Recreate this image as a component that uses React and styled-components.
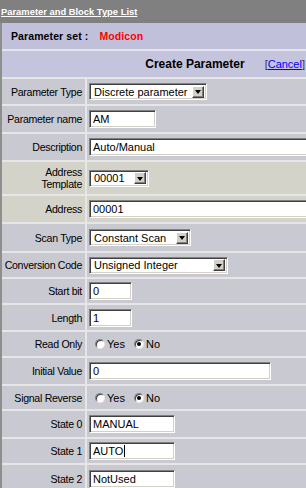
import React from "react";
import styled, { createGlobalStyle, css } from "styled-components";

const GlobalStyle = createGlobalStyle`
  body {
    margin: 0;
    overflow: hidden;
    font-family: "Liberation Sans", Arial, sans-serif;
    background: #c9c9d1;
  }
  * { box-sizing: border-box; }
`;

const Page = styled.div`
  width: 306px;
  overflow: hidden;
`;

const TitleBar = styled.div`
  height: 23px;
  background-color: #808080;
  display: flex;
  align-items: center;
  padding-left: 1px;
`;

const TitleLink = styled.a`
  color: #ffffff;
  font-size: 9.4px;
  font-weight: bold;
  text-decoration: underline;
  white-space: nowrap;
`;

const Panel = styled.div`
  border-left: 2px solid #8e8e8e;
  width: 320px;
`;

const SetRow = styled.div`
  height: 26px;
  background-color: #c0c0da;
  display: flex;
  align-items: center;
  padding-left: 9px;
  font-size: 10.5px;
  font-weight: bold;
  letter-spacing: 0.1px;
`;

const SetName = styled.span`
  color: #ff0000;
  margin-left: 11px;
`;

const HeadRow = styled.div`
  height: 28px;
  border-top: 2px solid #e4e4ee;
  background-color: #c4c4dc;
  display: flex;
  align-items: center;
  width: 304px;
  justify-content: flex-end;
  padding-right: 1px;
`;

const HeadTitle = styled.span`
  font-size: 12px;
  font-weight: bold;
  margin-right: 20px;
`;

const CancelBox = styled.span`
  font-size: 11px;
  color: #333;
`;

const CancelLink = styled.a`
  color: #0000ff;
  text-decoration: underline;
`;

const FormRow = styled.div`
  display: grid;
  grid-template-columns: 85px 1fr;
  height: ${(p) => p.$h}px;
  border-top: 2px solid #e6e6e6;
  background-color: ${(p) => (p.$green ? "#d3d3c9" : "#c9c9d1")};
`;

const Label = styled.div`
  display: flex;
  align-items: center;
  justify-content: flex-end;
  text-align: right;
  padding-right: 3px;
  font-size: 10.6px;
  letter-spacing: -0.3px;
  line-height: 12px;
  color: #000;
  border-right: 2px solid #e6e6e6;
  white-space: nowrap;
`;

const Field = styled.div`
  display: flex;
  align-items: center;
  padding-left: 2px;
  overflow: hidden;
`;

const sunken = css`
  border: 1px solid;
  border-color: #808080 #ffffff #ffffff #808080;
  box-shadow: inset 1px 1px 0 #404040, inset -1px -1px 0 #d4d0c8;
  background-color: #ffffff;
`;

const TextBox = styled.div`
  ${sunken};
  flex: none;
  width: ${(p) => p.$w}px;
  height: 18px;
  padding: 0 3px;
  font-size: 11px;
  line-height: 16px;
  white-space: nowrap;
  overflow: hidden;
`;

const Caret = styled.span`
  display: inline-block;
  width: 1px;
  height: 12px;
  background: #000;
  vertical-align: -2px;
  margin-left: 1px;
`;

const SelectBox = styled.div`
  ${sunken};
  flex: none;
  width: ${(p) => p.$w}px;
  height: 17px;
  display: flex;
  align-items: center;
  justify-content: space-between;
  padding: 2px 2px 2px 4px;
  font-size: 11px;
  white-space: nowrap;
`;

const DropButton = styled.span`
  width: 12px;
  height: 12px;
  background-color: #d4d0c8;
  border: 1px solid;
  border-color: #ffffff #404040 #404040 #ffffff;
  box-shadow: inset -1px -1px 0 #808080;
  display: flex;
  align-items: center;
  justify-content: center;
  &::after {
    content: "";
    border-left: 3.5px solid transparent;
    border-right: 3.5px solid transparent;
    border-top: 4px solid #000;
    margin-top: 1px;
  }
`;

const RadioGroup = styled.div`
  display: flex;
  align-items: center;
  padding-left: 6px;
  font-size: 11px;
`;

const RadioDot = styled.span`
  width: 10px;
  height: 10px;
  border-radius: 50%;
  background: #ffffff;
  border: 1px solid;
  border-color: #808080 #e8e8e8 #e8e8e8 #808080;
  box-shadow: inset 1px 1px 0 #404040;
  display: inline-flex;
  align-items: center;
  justify-content: center;
  margin-right: 2px;
  &::after {
    content: "";
    width: 4px;
    height: 4px;
    border-radius: 50%;
    background: ${(p) => (p.$on ? "#000" : "transparent")};
  }
`;

const RadioText = styled.span`
  margin-right: 9px;
`;

const Select = ({ w, value }) => (
  <SelectBox $w={w}>
    <span>{value}</span>
    <DropButton />
  </SelectBox>
);

const YesNo = () => (
  <RadioGroup>
    <RadioDot />
    <RadioText>Yes</RadioText>
    <RadioDot $on />
    <RadioText>No</RadioText>
  </RadioGroup>
);

const rows = [
  { label: "Parameter Type", h: 27, el: <Select w={118} value="Discrete parameter" /> },
  { label: "Parameter name", h: 28, el: <TextBox $w={67}>AM</TextBox> },
  { label: "Description", h: 28, el: <TextBox $w={250}>Auto/Manual</TextBox> },
  { label: ["Address", "Template"], h: 34, green: true, el: <Select w={60} value="00001" /> },
  { label: "Address", h: 28, green: true, el: <TextBox $w={250}>00001</TextBox> },
  { label: "Scan Type", h: 29, el: <Select w={102} value="Constant Scan" /> },
  { label: "Conversion Code", h: 26, el: <Select w={139} value="Unsigned Integer" /> },
  { label: "Start bit", h: 26, el: <TextBox $w={43}>0</TextBox> },
  { label: "Length", h: 27, el: <TextBox $w={43}>1</TextBox> },
  { label: "Read Only", h: 26, el: <YesNo /> },
  { label: "Initial Value", h: 28, el: <TextBox $w={182}>0</TextBox> },
  { label: "Signal Reverse", h: 25, el: <YesNo /> },
  { label: "State 0", h: 28, el: <TextBox $w={86}>MANUAL</TextBox> },
  {
    label: "State 1",
    h: 26,
    el: (
      <TextBox $w={86}>
        AUTO
        <Caret />
      </TextBox>
    ),
  },
  { label: "State 2", h: 30, el: <TextBox $w={86}>NotUsed</TextBox> },
];

const App = () => {
  return (
    <Page>
      <GlobalStyle />
      <TitleBar>
        <TitleLink>Parameter and Block Type List</TitleLink>
      </TitleBar>
      <Panel>
        <SetRow>
          Parameter set :<SetName>Modicon</SetName>
        </SetRow>
        <HeadRow>
          <HeadTitle>Create Parameter</HeadTitle>
          <CancelBox>
            [<CancelLink>Cancel</CancelLink>]
          </CancelBox>
        </HeadRow>
        {rows.map((r, i) => (
          <FormRow key={i} $h={r.h} $green={r.green}>
            <Label>
              {Array.isArray(r.label) ? (
                <span>
                  {r.label[0]}
                  <br />
                  {r.label[1]}
                </span>
              ) : (
                r.label
              )}
            </Label>
            <Field>{r.el}</Field>
          </FormRow>
        ))}
      </Panel>
    </Page>
  );
};

export default App;
